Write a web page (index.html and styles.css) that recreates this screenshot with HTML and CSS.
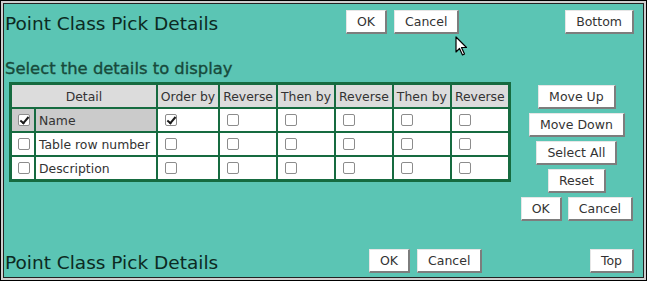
FILE: index.html
```html
<!DOCTYPE html>
<html lang="en">
<head>
    <meta charset="UTF-8">
    <title>Point Class Pick Details</title>
    <link rel="stylesheet" href="styles.css">
</head>
<body>
    <div class="window">
        <div class="frame">
            <div class="bar bar-top">
                <div class="bar-title">Point Class Pick Details</div>
                <div class="btn-group">
                    <button>OK</button>
                    <button>Cancel</button>
                </div>
                <button class="nav-btn">Bottom</button>
            </div>

            <div class="section">Select the details to display</div>

            <div class="content">
                <table class="details">
                    <tr>
                        <th colspan="2">Detail</th>
                        <th>Order by</th>
                        <th>Reverse</th>
                        <th>Then by</th>
                        <th>Reverse</th>
                        <th>Then by</th>
                        <th>Reverse</th>
                    </tr>
                    <tr class="picked">
                        <td class="sel"><input type="checkbox" class="tick" checked></td>
                        <td class="name">Name</td>
                        <td><input type="checkbox" class="tick" checked></td>
                        <td><input type="checkbox" class="tick"></td>
                        <td><input type="checkbox" class="tick"></td>
                        <td><input type="checkbox" class="tick"></td>
                        <td><input type="checkbox" class="tick"></td>
                        <td><input type="checkbox" class="tick"></td>
                    </tr>
                    <tr>
                        <td class="sel"><input type="checkbox" class="tick"></td>
                        <td class="name">Table row number</td>
                        <td><input type="checkbox" class="tick"></td>
                        <td><input type="checkbox" class="tick"></td>
                        <td><input type="checkbox" class="tick"></td>
                        <td><input type="checkbox" class="tick"></td>
                        <td><input type="checkbox" class="tick"></td>
                        <td><input type="checkbox" class="tick"></td>
                    </tr>
                    <tr>
                        <td class="sel"><input type="checkbox" class="tick"></td>
                        <td class="name">Description</td>
                        <td><input type="checkbox" class="tick"></td>
                        <td><input type="checkbox" class="tick"></td>
                        <td><input type="checkbox" class="tick"></td>
                        <td><input type="checkbox" class="tick"></td>
                        <td><input type="checkbox" class="tick"></td>
                        <td><input type="checkbox" class="tick"></td>
                    </tr>
                </table>

                <div class="actions">
                    <button>Move Up</button>
                    <button>Move Down</button>
                    <button>Select All</button>
                    <button>Reset</button>
                    <div class="btn-group">
                        <button>OK</button>
                        <button>Cancel</button>
                    </div>
                </div>
            </div>

            <div class="bar bar-bottom">
                <div class="bar-title">Point Class Pick Details</div>
                <div class="btn-group">
                    <button>OK</button>
                    <button>Cancel</button>
                </div>
                <button class="nav-btn">Top</button>
            </div>
        </div>

        <svg class="pointer" width="14" height="21" viewBox="0 0 14 21">
            <path d="M1 1 L1 16 L4.5 12.5 L7.5 19 L9.5 18 L6.5 11.5 L11.5 11.5 Z" fill="#fff" stroke="#000" stroke-width="1.2" stroke-linejoin="round"/>
        </svg>
    </div>
</body>
</html>
```

FILE: styles.css
```css
body {
    margin: 0;
    font-family: "DejaVu Sans", Verdana, sans-serif;
    background-color: #5bc5b4;
}
.window {
    position: relative;
    height: 281px;
    box-sizing: border-box;
    border: 1px solid #000;
    padding: 2px;
    background-color: #cfcfcf;
}
.frame {
    height: 100%;
    box-sizing: border-box;
    border: 1px solid #222;
    background-color: #5bc5b4;
    display: flex;
    flex-direction: column;
}
.bar {
    display: grid;
    align-items: center;
    padding: 0 9px 0 1px;
}
.bar-top {
    grid-template-columns: 341px auto 1fr;
    padding-top: 6px;
}
.bar-bottom {
    grid-template-columns: 364px auto 1fr;
    margin-top: auto;
    padding-bottom: 4px;
}
.bar-title {
    color: #0c2a22;
    font-size: 18.5px;
}
.bar-top .bar-title {
    padding-top: 2px;
}
.bar-bottom .bar-title {
    padding-top: 3px;
}
.nav-btn {
    justify-self: end;
}
.btn-group {
    display: flex;
    gap: 7px;
}
button {
    font-family: "DejaVu Sans", Verdana, sans-serif;
    font-size: 12.5px;
    color: #333;
    height: 24px;
    padding: 0 10px;
    background-color: #fff;
    border-style: solid;
    border-width: 1px 2px 2px 1px;
    border-color: #e6e6e6 #7d7d7d #7d7d7d #e6e6e6;
    border-radius: 0;
    cursor: pointer;
}
.section {
    margin-top: 25px;
    padding-left: 1px;
    font-size: 16.4px;
    line-height: 20px;
    color: #174a3b;
    -webkit-text-stroke: 0.35px #174a3b;
}
.content {
    display: flex;
    align-items: flex-start;
    gap: 10px;
    margin-top: 3px;
    padding-left: 5px;
}
.details {
    border: 1px solid #166b40;
    border-spacing: 2px;
    background-color: #166b40;
    font-size: 12.4px;
    color: #333;
}
.details th,
.details td {
    height: 22px;
    padding: 0 3px;
    white-space: nowrap;
    vertical-align: middle;
}
.details th {
    font-weight: normal;
    background-color: #dcdcdc;
}
.details td {
    background-color: #fff;
    text-align: left;
}
.details td.sel {
    padding: 0;
}
.details td.name {
    padding-right: 6px;
}
.details .picked td.sel,
.details .picked td.name {
    background-color: #cbcbcb;
}
.tick {
    -webkit-appearance: none;
    appearance: none;
    position: relative;
    display: block;
    width: 12px;
    height: 12px;
    margin: 3px 3px 3px 4px;
    box-sizing: border-box;
    border: 1px solid #8c8c8c;
    border-radius: 2px;
    background-color: #fff;
}
.sel .tick {
    margin: 3px 4px 3px 6px;
}
.tick:checked::after {
    content: "";
    position: absolute;
    left: 3px;
    top: 0;
    width: 3px;
    height: 7px;
    border: solid #1a1a1a;
    border-width: 0 2px 2px 0;
    transform: rotate(40deg);
}
.actions {
    display: flex;
    flex-direction: column;
    align-items: center;
    gap: 4px;
    margin-top: 3px;
}
.actions .btn-group {
    gap: 6px;
}
.pointer {
    position: absolute;
    left: 454px;
    top: 35px;
}
```
